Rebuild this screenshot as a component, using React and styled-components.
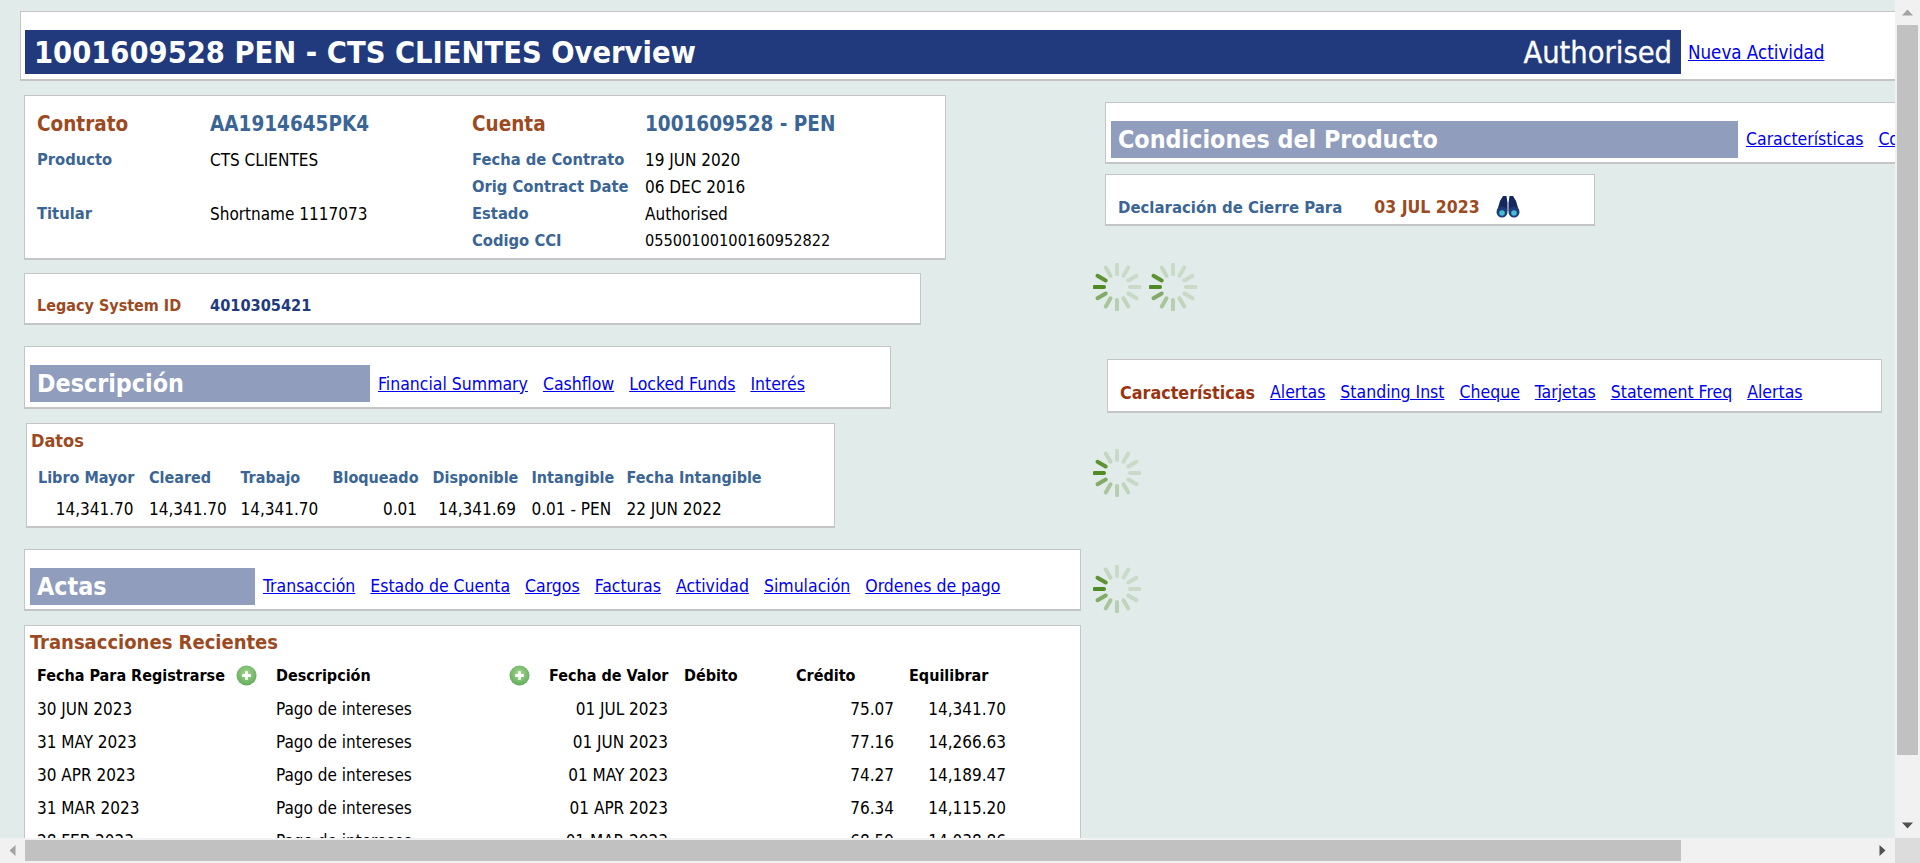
import React from 'react';
import styled, { createGlobalStyle } from 'styled-components';

const GlobalStyle = createGlobalStyle`
  html, body {
    margin: 0;
    height: 100%;
    overflow: hidden;
    background: #e1ebe9;
  }
  body {
    font-family: "DejaVu Sans Condensed", "DejaVu Sans", sans-serif;
    font-stretch: condensed;
    font-size: 14.5px;
    color: #000;
  }
`;

const Viewport = styled.div`
  width: 1920px;
  height: 863px;
  display: grid;
  grid-template-columns: 1895px 25px;
  grid-template-rows: 838px 25px;
`;

const Page = styled.div`
  overflow: hidden;
  padding-top: 11px;
`;

const Panel = styled.div`
  box-sizing: border-box;
  background: #fff;
  border: 1px solid #c4c6c6;
  border-bottom-width: 2px;
  overflow: hidden;
`;

const TopPanel = styled(Panel)`
  width: 1880px;
  height: 70px;
  margin-left: 20px;
  padding: 18px 0 0 4px;
  display: flex;
  align-items: flex-start;
`;

const TitleBar = styled.div`
  width: 1656px;
  height: 44px;
  flex: none;
  background: #213a7d;
  color: #fff;
  display: flex;
  justify-content: space-between;
  align-items: center;
  padding: 1px 9px 0 9px;
  box-sizing: border-box;
`;

const Title = styled.span`
  font-size: 30.5px;
  font-weight: bold;
`;

const Status = styled.span`
  font-size: 30.5px;
  -webkit-text-stroke: 0.3px #fff;
`;

const Link = styled.a`
  color: #0000ee;
  text-decoration: underline;
  font-size: 17.5px;
  white-space: nowrap;
  cursor: pointer;
`;

const TopLink = styled(Link)`
  margin: 12px 0 0 7px;
  font-size: 18.6px;
`;

const Columns = styled.div`
  display: flex;
  align-items: flex-start;
`;

const LeftColumn = styled.div`
  width: 1057px;
  margin-left: 24px;
  padding-top: 14px;
  flex: none;
`;

const RightColumn = styled.div`
  width: 800px;
  margin-left: 24px;
  padding-top: 21px;
  flex: none;
`;

const ContractPanel = styled(Panel)`
  width: 922px;
  height: 165px;
  padding: 5px 0 0 12px;
  display: grid;
  grid-template-columns: 173px 262px 173px 1fr;
  grid-template-rows: 45px repeat(4, 27px);
  align-items: center;
`;

const BigLabel = styled.span`
  color: #9c4a22;
  font-size: 20.5px;
  font-weight: bold;
`;

const BigValue = styled.span`
  color: #3a6595;
  font-size: 20.5px;
  font-weight: bold;
`;

const Label = styled.span`
  color: #3a6595;
  font-size: ${(p) => p.$size || 16.4}px;
  font-weight: bold;
  white-space: nowrap;
`;

const Value = styled.span`
  font-size: ${(p) => p.$size || 17}px;
  white-space: nowrap;
`;

const LegacyPanel = styled(Panel)`
  width: 897px;
  height: 52px;
  margin-top: 13px;
  padding: 14px 0 0 12px;
  display: flex;
  align-items: center;
`;

const LegacyLabel = styled.span`
  color: #9c4a22;
  font-size: 16px;
  font-weight: bold;
  width: 173px;
`;

const LegacyValue = styled.span`
  color: #213a7d;
  font-size: 16.2px;
  font-weight: bold;
`;

const SectionPanel = styled(Panel)`
  width: ${(p) => p.$w}px;
  height: ${(p) => p.$h || 63}px;
  margin-top: ${(p) => p.$top}px;
  padding: 13px 0 0 5px;
  display: flex;
  align-items: center;
`;

const SectionBar = styled.div`
  width: ${(p) => p.$w}px;
  height: 37px;
  flex: none;
  box-sizing: border-box;
  background: #919dbd;
  color: #fff;
  font-size: 24.8px;
  font-weight: bold;
  line-height: 37px;
  padding-left: 7px;
`;

const Links = styled.div`
  display: flex;
  gap: 15px;
  margin-left: 8px;
`;

const DataPanel = styled(Panel)`
  width: 809px;
  height: 105px;
  margin: 14px 0 0 2px;
  padding: 6px 0 0 4px;
`;

const SubTitle = styled.div`
  color: #9c4a22;
  font-size: ${(p) => p.$size}px;
  font-weight: bold;
  line-height: 22px;
`;

const DataGrid = styled.div`
  display: grid;
  grid-template-columns: 95.5px 76px 76.5px 84.5px 83.5px 79.5px 1fr;
  column-gap: 15.5px;
  margin: 9px 0 0 7px;
  grid-auto-rows: 32px;
  align-items: center;
`;

const DataCell = styled(Value)`
  text-align: ${(p) => (p.$right ? 'right' : 'left')};
`;

const ListPanel = styled(Panel)`
  width: 1057px;
  height: 300px;
  margin-top: 14px;
  padding: 5px 0 0 5px;
`;

const ListGrid = styled.div`
  display: grid;
  grid-template-columns: 239px 273px 135px 112px 113px 97px;
  grid-auto-rows: 33px;
  margin: 6px 0 0 7px;
  align-items: center;
`;

const HeadCell = styled.span`
  font-size: 16px;
  font-weight: bold;
  white-space: nowrap;
  display: flex;
  align-items: center;
  justify-content: ${(p) => (p.$between ? 'space-between' : 'flex-start')};
  padding-right: ${(p) => (p.$between ? 19 : 0)}px;
`;

const ListCell = styled(Value)`
  text-align: ${(p) => (p.$pad !== undefined ? 'right' : 'left')};
  padding-right: ${(p) => p.$pad || 0}px;
`;

const StatementPanel = styled(Panel)`
  width: 490px;
  height: 52px;
  margin-top: 10px;
  padding: 15px 0 0 12px;
  display: flex;
  align-items: center;
`;

const StatementDate = styled.span`
  color: #9c4a22;
  font-size: 17.5px;
  font-weight: bold;
  margin-left: 32px;
`;

const SpinnerRow = styled.div`
  display: flex;
  gap: 8px;
  margin: ${(p) => p.$top}px 0 0 -12px;
  height: 48px;
`;

const FeaturesPanel = styled(Panel)`
  width: 775px;
  height: 54px;
  margin: ${(p) => p.$top}px 0 0 2px;
  padding: 13px 0 0 12px;
  display: flex;
  align-items: center;
`;

const FeaturesTitle = styled.span`
  color: #9a3410;
  font-size: 17.8px;
  font-weight: bold;
`;

const FeatureLinks = styled(Links)`
  margin-left: 15px;
`;

const VerticalBar = styled.div`
  background: #f1f1f1;
  display: flex;
  flex-direction: column;
  align-items: center;
  justify-content: space-between;
  position: relative;
`;

const HorizontalBar = styled.div`
  background: #f1f1f1;
  display: flex;
  align-items: center;
  position: relative;
`;

const Corner = styled.div`
  background: #dcdcdc;
`;

const ThumbV = styled.div`
  position: absolute;
  top: 25px;
  left: 2px;
  width: 21px;
  height: 730px;
  background: #c1c1c1;
`;

const ThumbH = styled.div`
  position: absolute;
  left: 25px;
  top: 2px;
  height: 21px;
  width: 1656px;
  background: #c1c1c1;
`;

const ArrowBox = styled.div`
  width: 25px;
  height: 25px;
  display: flex;
  align-items: center;
  justify-content: center;
  margin-left: ${(p) => (p.$end ? 'auto' : 0)};
`;

const Arrow = ({ dir, color }) => {
  const points = {
    up: '5.5,2.5 11,8.5 0,8.5',
    down: '0,2.5 11,2.5 5.5,8.5',
    left: '8.5,0 8.5,11 2.5,5.5',
    right: '2.5,0 8.5,5.5 2.5,11',
  }[dir];
  return (
    <svg width="11" height="11" viewBox="0 0 11 11">
      <polygon points={points} fill={color} />
    </svg>
  );
};

// 12 spokes, the darkest at nine o'clock and fading clockwise
const Spinner = () => (
  <svg width="48" height="48" viewBox="0 0 48 48">
    {Array.from({ length: 12 }).map((_, i) => {
      const angle = 270 + i * 30;
      const fade = [1, 0.9, 0.2, 0.16, 0.16, 0.16, 0.16, 0.18, 0.22, 0.28, 0.38, 0.65][i];
      return (
        <line
          key={i}
          x1="24"
          y1="1.500"
          x2="24"
          y2="11"
          stroke="#4f8a22"
          strokeWidth="4"
          strokeLinecap="round"
          opacity={fade}
          transform={`rotate(${angle} 24 24)`}
        />
      );
    })}
  </svg>
);

const Binoculars = () => (
  <svg width="24" height="22" viewBox="0 0 24 22" style={{ marginLeft: 16, flex: 'none' }}>
    <path d="M7 0h3.500l1 7v8H1L4 5z" fill="#16275e" />
    <path d="M13.500 0H17l3 5 3 10H12.500V7z" fill="#16275e" />
    <circle cx="6" cy="16" r="5.500" fill="#1c3b78" />
    <circle cx="18" cy="16" r="5.500" fill="#1c3b78" />
    <circle cx="6" cy="17" r="2.800" fill="#45bcd0" />
    <circle cx="18" cy="17" r="2.800" fill="#45bcd0" />
  </svg>
);

const PlusIcon = () => (
  <svg width="21" height="21" viewBox="0 0 22 22" style={{ flex: 'none' }}>
    <defs>
      <radialGradient id="plusFill" cx="50%" cy="40%" r="60%">
        <stop offset="0%" stopColor="#a5d48f" />
        <stop offset="100%" stopColor="#62ad5c" />
      </radialGradient>
    </defs>
    <circle cx="11" cy="11" r="10.500" fill="url(#plusFill)" />
    <path d="M9.500 6.500h3v3h3v3h-3v3h-3v-3h-3v-3h3z" fill="#fff" />
  </svg>
);

const transactions = [
  ['30 JUN 2023', '01 JUL 2023', '75.07', '14,341.70'],
  ['31 MAY 2023', '01 JUN 2023', '77.16', '14,266.63'],
  ['30 APR 2023', '01 MAY 2023', '74.27', '14,189.47'],
  ['31 MAR 2023', '01 APR 2023', '76.34', '14,115.20'],
  ['28 FEB 2023', '01 MAR 2023', '68.59', '14,038.86'],
];

const balances = [
  ['Libro Mayor', '14,341.70', true],
  ['Cleared', '14,341.70', true],
  ['Trabajo', '14,341.70', true],
  ['Bloqueado', '0.01', true],
  ['Disponible', '14,341.69', true],
  ['Intangible', '0.01 - PEN', false],
  ['Fecha Intangible', '22 JUN 2022', false],
];

const App = () => (
  <>
    <GlobalStyle />
    <Viewport>
      <Page>
        <TopPanel>
          <TitleBar>
            <Title>1001609528 PEN - CTS CLIENTES Overview</Title>
            <Status>Authorised</Status>
          </TitleBar>
          <TopLink>Nueva Actividad</TopLink>
        </TopPanel>

        <Columns>
          <LeftColumn>
            <ContractPanel>
              <BigLabel>Contrato</BigLabel>
              <BigValue>AA1914645PK4</BigValue>
              <BigLabel>Cuenta</BigLabel>
              <BigValue>1001609528 - PEN</BigValue>
              <Label>Producto</Label>
              <Value>CTS CLIENTES</Value>
              <Label>Fecha de Contrato</Label>
              <Value>19 JUN 2020</Value>
              <span />
              <span />
              <Label>Orig Contract Date</Label>
              <Value>06 DEC 2016</Value>
              <Label>Titular</Label>
              <Value>Shortname 1117073</Value>
              <Label>Estado</Label>
              <Value>Authorised</Value>
              <span />
              <span />
              <Label>Codigo CCI</Label>
              <Value $size={16.2}>05500100100160952822</Value>
            </ContractPanel>

            <LegacyPanel>
              <LegacyLabel>Legacy System ID</LegacyLabel>
              <LegacyValue>4010305421</LegacyValue>
            </LegacyPanel>

            <SectionPanel $w={867} $top={21}>
              <SectionBar $w={340}>Descripción</SectionBar>
              <Links>
                <Link>Financial Summary</Link>
                <Link>Cashflow</Link>
                <Link>Locked Funds</Link>
                <Link>Interés</Link>
              </Links>
            </SectionPanel>

            <DataPanel>
              <SubTitle $size={18}>Datos</SubTitle>
              <DataGrid>
                {balances.map(([name]) => (
                  <Label key={name} $size={16}>{name}</Label>
                ))}
                {balances.map(([name, amount, right]) => (
                  <DataCell key={name} $right={right}>{amount}</DataCell>
                ))}
              </DataGrid>
            </DataPanel>

            <SectionPanel $w={1057} $top={21} $h={62}>
              <SectionBar $w={225}>Actas</SectionBar>
              <Links>
                <Link>Transacción</Link>
                <Link>Estado de Cuenta</Link>
                <Link>Cargos</Link>
                <Link>Facturas</Link>
                <Link>Actividad</Link>
                <Link>Simulación</Link>
                <Link>Ordenes de pago</Link>
              </Links>
            </SectionPanel>

            <ListPanel>
              <SubTitle $size={20}>Transacciones Recientes</SubTitle>
              <ListGrid>
                <HeadCell $between>Fecha Para Registrarse<PlusIcon /></HeadCell>
                <HeadCell $between>Descripción<PlusIcon /></HeadCell>
                <HeadCell>Fecha de Valor</HeadCell>
                <HeadCell>Débito</HeadCell>
                <HeadCell>Crédito</HeadCell>
                <HeadCell>Equilibrar</HeadCell>
                {transactions.map(([booked, valued, credit, balance]) => (
                  <React.Fragment key={booked}>
                    <ListCell>{booked}</ListCell>
                    <ListCell>Pago de intereses</ListCell>
                    <ListCell $pad={16}>{valued}</ListCell>
                    <span />
                    <ListCell $pad={15}>{credit}</ListCell>
                    <ListCell $pad={0}>{balance}</ListCell>
                  </React.Fragment>
                ))}
              </ListGrid>
            </ListPanel>
          </LeftColumn>

          <RightColumn>
            <SectionPanel $w={800} $top={0} $h={62}>
              <SectionBar $w={627}>Condiciones del Producto</SectionBar>
              <Links>
                <Link>Características</Link>
                <Link>Condiciones</Link>
              </Links>
            </SectionPanel>

            <StatementPanel>
              <Label $size={16.6}>Declaración de Cierre Para</Label>
              <StatementDate>03 JUL 2023</StatementDate>
              <Binoculars />
            </StatementPanel>

            <SpinnerRow $top={37}>
              <Spinner />
              <Spinner />
            </SpinnerRow>

            <FeaturesPanel $top={48}>
              <FeaturesTitle>Características</FeaturesTitle>
              <FeatureLinks>
                <Link>Alertas</Link>
                <Link>Standing Inst</Link>
                <Link>Cheque</Link>
                <Link>Tarjetas</Link>
                <Link>Statement Freq</Link>
                <Link>Alertas</Link>
              </FeatureLinks>
            </FeaturesPanel>

            <SpinnerRow $top={36}>
              <Spinner />
            </SpinnerRow>

            <SpinnerRow $top={68}>
              <Spinner />
            </SpinnerRow>
          </RightColumn>
        </Columns>
      </Page>

      <VerticalBar>
        <ThumbV />
        <ArrowBox><Arrow dir="up" color="#a3a3a3" /></ArrowBox>
        <ArrowBox><Arrow dir="down" color="#505050" /></ArrowBox>
      </VerticalBar>

      <HorizontalBar>
        <ThumbH />
        <ArrowBox><Arrow dir="left" color="#a3a3a3" /></ArrowBox>
        <ArrowBox $end><Arrow dir="right" color="#505050" /></ArrowBox>
      </HorizontalBar>

      <Corner />
    </Viewport>
  </>
);

export default App;
